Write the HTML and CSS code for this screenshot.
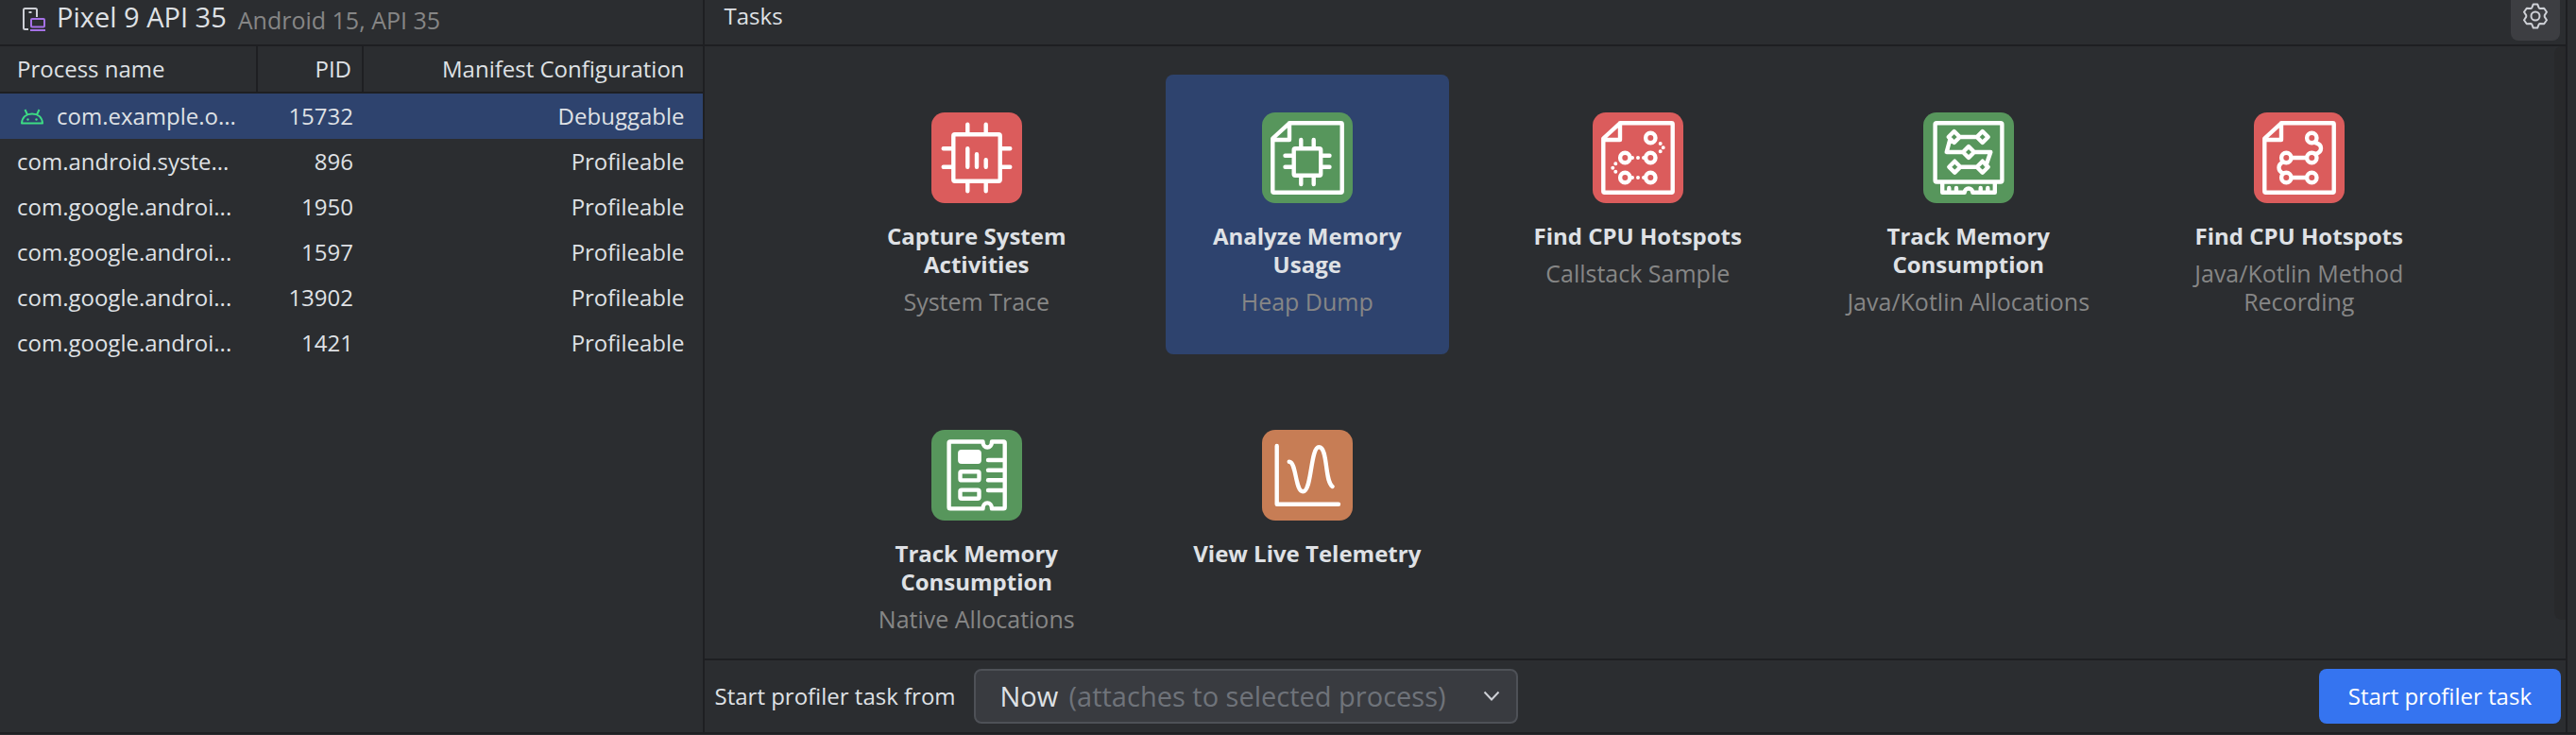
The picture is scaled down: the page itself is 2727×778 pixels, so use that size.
FILE: index.html
```html
<!DOCTYPE html>
<html lang="en">
<head>
<meta charset="utf-8">
<title>Profiler</title>
<link rel="stylesheet" href="styles.css">
</head>
<body>
<svg class="defs" aria-hidden="true">
  <symbol id="page" viewBox="0 0 96 96">
    <path d="M29 11.3H83.5Q84.7 11.3 84.7 12.5V83.5Q84.7 84.7 83.5 84.7H12.5Q11.3 84.7 11.3 83.5V27.5ZM29 11.3V29H11.3"/>
  </symbol>
</svg>
<div class="profiler">
  <main class="panes">
    <section class="processes">
      <header class="bar device">
        <svg class="device-icon" viewBox="0 0 28 28" aria-hidden="true">
          <path d="M8 25H4.5Q3 25 3 23.5V4.5Q3 3 4.5 3H15.5Q17 3 17 4.5V12" stroke="#ced0d6"/>
          <path d="M8.5 7H11.5" stroke="#ced0d6"/>
          <rect x="11" y="14" width="14" height="8.5" rx="1" stroke="#a571e6"/>
          <path d="M10 26H26" stroke="#a571e6"/>
        </svg>
        <h1 class="device-name">Pixel 9 API 35</h1>
        <span class="device-detail">Android 15, API 35</span>
      </header>
      <table class="process-table">
        <colgroup><col class="col-name"><col class="col-pid"><col></colgroup>
        <thead><tr><th>Process name</th><th>PID</th><th>Manifest Configuration</th></tr></thead>
        <tbody>
          <tr class="selected"><td><span class="app"><svg class="app-icon" viewBox="0 0 26 18" aria-hidden="true"><path d="M2 16.5C2.5 10 7 6.5 13 6.5S23.5 10 24 16.5ZM8 7.5L5.5 2M18 7.5L20.5 2"/><circle cx="8.5" cy="12.5" r="1.2"/><circle cx="17.5" cy="12.5" r="1.2"/></svg>com.example.o...</span></td><td>15732</td><td>Debuggable</td></tr>
          <tr><td>com.android.syste...</td><td>896</td><td>Profileable</td></tr>
          <tr><td>com.google.androi...</td><td>1950</td><td>Profileable</td></tr>
          <tr><td>com.google.androi...</td><td>1597</td><td>Profileable</td></tr>
          <tr><td>com.google.androi...</td><td>13902</td><td>Profileable</td></tr>
          <tr><td>com.google.androi...</td><td>1421</td><td>Profileable</td></tr>
        </tbody>
      </table>
    </section>
    <section class="tasks">
      <header class="bar tasks-bar">
        <h2 class="tasks-title">Tasks</h2>
        <button class="settings" type="button" aria-label="Settings">
          <svg viewBox="0 0 30 30" aria-hidden="true"><path d="M12.8 2.5H17.2L18.8 6.4Q19.3 7 20 7.1L24.2 6.7L27 10.8L24.8 14.1Q24.5 15 24.8 15.9L27 19.2L24.2 23.3L20 22.9Q19.3 23 18.8 23.6L17.2 27.5H12.8L11.2 23.6Q10.7 23 10 22.9L5.8 23.3L3 19.2L5.2 15.9Q5.5 15 5.2 14.1L3 10.8L5.8 6.7L10 7.1Q10.7 7 11.2 6.4Z"/><circle cx="15" cy="15" r="4.5"/></svg>
        </button>
      </header>
      <div class="task-area">
        <div class="task-grid">
          <button class="task" type="button">
            <svg class="task-icon red" viewBox="0 0 96 96" aria-hidden="true"><rect x="23.3" y="23.3" width="49.4" height="49.4" rx="1.5"/><path d="M38.3 12.7V22M57.7 12.7V22M38.3 74V83.3M57.7 74V83.3M12.7 38.3H22M12.7 57.7H22M74 38.3H83.3M74 57.7H83.3M38.3 38.2V57.8M48 44.2V57.8M57.7 50.2V57.8"/></svg>
            <span class="task-name">Capture System Activities</span><span class="task-kind">System Trace</span>
          </button>
          <button class="task selected" type="button">
            <svg class="task-icon green" viewBox="0 0 96 96" aria-hidden="true"><use href="#page"/><rect x="33.7" y="38.3" width="28.5" height="28.5" rx="1.5"/><path d="M41.3 29V37M54.7 29V37M41.3 68V76M54.7 68V76M24.5 45.7H32M24.5 57.7H32M64 45.7H71.5M64 57.7H71.5"/></svg>
            <span class="task-name">Analyze Memory Usage</span><span class="task-kind">Heap Dump</span>
          </button>
          <button class="task" type="button">
            <svg class="task-icon red" viewBox="0 0 96 96" aria-hidden="true"><use href="#page"/><circle cx="61.3" cy="27" r="5.2"/><circle cx="34.3" cy="48" r="5.2"/><circle cx="61.3" cy="48" r="5.2"/><circle cx="34.3" cy="69" r="5.2"/><circle cx="61.3" cy="69" r="5.2"/><path class="dots" d="M71.7 33h0M74.7 37.3h0M71.7 41.3h0M42 48h0M48 48h0M54 48h0M42 69h0M48 69h0M54 69h0M24.3 54.3h0M21.3 58.7h0M24.3 62.7h0"/></svg>
            <span class="task-name">Find CPU Hotspots</span><span class="task-kind">Callstack Sample</span>
          </button>
          <button class="task" type="button">
            <svg class="task-icon green" viewBox="0 0 96 96" aria-hidden="true"><rect x="12.6" y="11.3" width="70.8" height="62.2" rx="1.5"/><path d="M32.7 20L38.7 26L32.7 32L26.7 26ZM62.7 20L68.7 26L62.7 32L56.7 26ZM48 36L54 42L48 48L42 42ZM33.3 51.7L39.3 57.7L33.3 63.7L27.3 57.7ZM62.7 51.7L68.7 57.7L62.7 63.7L56.7 57.7ZM39 26H56.5M28.5 28L24.7 42H42M54 42H71.3L66.5 56M39.5 57.7H56.5"/><path d="M20.2 75V84.8H43.7C43.7 79 52.3 79 52.3 84.8H75.8V75M27.3 80V83.5M35 80V83.5M60.7 80V83.5M68.3 80V83.5"/></svg>
            <span class="task-name">Track Memory Consumption</span><span class="task-kind">Java/Kotlin Allocations</span>
          </button>
          <button class="task" type="button">
            <svg class="task-icon red" viewBox="0 0 96 96" aria-hidden="true"><use href="#page"/><circle cx="61.3" cy="27" r="5.2"/><circle cx="34.3" cy="48" r="5.2"/><circle cx="61.3" cy="48" r="5.2"/><circle cx="34.3" cy="69" r="5.2"/><circle cx="61.3" cy="69" r="5.2"/><path d="M40 48H55.5M40 69H55.5M65 32C73 34 73 42 65 44M31 52.5C25 55 25 62 31 64.5"/></svg>
            <span class="task-name">Find CPU Hotspots</span><span class="task-kind">Java/Kotlin Method Recording</span>
          </button>
          <button class="task" type="button">
            <svg class="task-icon green" viewBox="0 0 96 96" aria-hidden="true"><path d="M20 12.5H54.5C54.5 20.5 64 20.5 64 12.5H76.3Q77.7 12.5 77.7 14V82Q77.7 83.4 76.3 83.4H64C64 75.4 54.5 75.4 54.5 83.4H20Q18.6 83.4 18.6 82V14Q18.6 12.5 20 12.5Z"/><rect x="30.3" y="23.3" width="20.4" height="10.4" rx="1.5" fill="#fff"/><rect x="30.5" y="44.2" width="20" height="9.2" rx="1.5"/><rect x="30.5" y="63.6" width="20" height="9.2" rx="1.5"/><path d="M60 32H77M60 42.7H77M60 53.3H77M60 64H77"/></svg>
            <span class="task-name">Track Memory Consumption</span><span class="task-kind">Native Allocations</span>
          </button>
          <button class="task" type="button">
            <svg class="task-icon orange" viewBox="0 0 96 96" aria-hidden="true"><path d="M15.7 17V78.7H81M28.7 33.7C36.5 33.7 35 65.3 43.3 65.3C53 65.3 51 18.3 60.3 18.3C70 18.3 66 54 74.5 60"/></svg>
            <span class="task-name">View Live Telemetry</span>
          </button>
        </div>
        <div class="scroll-track"></div>
      </div>
      <footer class="start-bar">
        <label class="start-label" for="start-from">Start profiler task from</label>
        <div class="start-select">
          <select id="start-from"><option>Now</option></select>
          <span class="hint">(attaches to selected process)</span>
          <svg class="chevron" viewBox="0 0 18 12" aria-hidden="true"><path d="M1.5 1.5L9 9.5L16.5 1.5"/></svg>
        </div>
        <button class="start" type="button">Start profiler task</button>
      </footer>
    </section>
  </main>
</div>
</body>
</html>
```
FILE: styles.css
```css
* { box-sizing: border-box; }
body {
  margin: 0;
  background: #2b2d30;
  color: #dfe1e5;
  font: 24px/30px "Open Sans", "Noto Sans", sans-serif;
}
h1, h2 { margin: 0; font-weight: 400; }
button, select { font: inherit; color: inherit; border: 0; }
svg { display: block; fill: none; flex: none; }
.defs { position: absolute; width: 0; height: 0; }

.profiler {
  display: flex;
  flex-direction: column;
  height: 100vh;
  padding-bottom: 1px;
  overflow: hidden;
}
.profiler::after { content: ""; height: 2px; flex: none; background: #1e1f22; }
.panes {
  display: flex;
  flex: 1;
  min-height: 0;
  margin-right: 9px;
  border-right: 2px solid #1e1f22;
}

.bar {
  display: flex;
  height: 49px;
  flex: none;
  border-bottom: 2px solid #1e1f22;
}
.processes { width: 27.45%; flex: none; border-right: 2px solid #1e1f22; }
.device { align-items: flex-start; padding-left: 22px; }
.device-icon { width: 28px; height: 28px; margin-top: 6px; stroke-width: 2; }
.device-name { margin-left: 10px; font-size: 29px; line-height: 36px; white-space: nowrap; }
.device-detail { margin-left: 12px; color: #868686; font-size: 25px; line-height: 42px; white-space: nowrap; }

.process-table { width: 100%; table-layout: fixed; border-collapse: separate; border-spacing: 0; }
.col-name { width: 273px; }
.col-pid { width: 112px; }
.process-table th, .process-table td {
  height: 48px;
  padding: 0 19px 0 18px;
  font-weight: 400;
  text-align: right;
  white-space: nowrap;
}
.process-table th { height: 50px; border-bottom: 2px solid #1e1f22; border-right: 2px solid #1e1f22; }
.process-table th:last-child { border-right: 0; }
.process-table th:first-child, .process-table td:first-child { text-align: left; padding-right: 0; }
.process-table th:nth-child(2), .process-table td:nth-child(2) { padding: 0 11px 0 0; }
.selected { background: #2e436e; }
.app { display: flex; align-items: center; gap: 13px; padding-left: 3px; }
.app-icon { width: 26px; height: 18px; stroke: #3ddc84; stroke-width: 2; stroke-linejoin: round; }
.app-icon circle { fill: #3ddc84; stroke: none; }

.tasks { display: flex; flex: 1; min-width: 0; flex-direction: column; }
.tasks-bar { justify-content: space-between; padding: 0 6px 0 21px; }
.tasks-title { font-size: 24px; line-height: 34px; }
.settings {
  display: grid;
  place-items: center;
  width: 52px;
  height: 43px;
  padding: 0 0 9px;
  border-radius: 0 0 8px 8px;
  background: #3d3e42;
}
.settings svg { width: 30px; height: 30px; stroke: #ced0d6; stroke-width: 2; stroke-linejoin: round; }

.task-area { display: flex; flex: 1; min-height: 0; overflow: hidden; }
.task-grid {
  display: grid;
  flex: 1;
  grid-template-columns: repeat(auto-fill, 300px);
  grid-auto-rows: 296px;
  gap: 40px 50px;
  justify-content: center;
  padding: 30px 120px 0 138px;
}
.task {
  display: flex;
  flex-direction: column;
  align-items: center;
  padding: 40px 18px 0;
  border-radius: 8px;
  background: transparent;
}
.task.selected { background: #2e436e; }
.task-icon {
  width: 96px;
  height: 96px;
  border-radius: 14px;
  stroke: #fff;
  stroke-width: 4.4;
  stroke-linecap: round;
  stroke-linejoin: round;
}
.dots { stroke-width: 4; }
.red { background: #db5c5c; }
.green { background: #57965c; }
.orange { background: #c77d55; }
.task-name { margin-top: 20px; font-weight: 700; }
.task-kind { margin-top: 9px; color: #868686; font-size: 25px; }
.scroll-track { width: 12px; flex: none; margin-bottom: 41px; border-radius: 8px 0 0 8px; background: #28292b; }

.start-bar {
  display: flex;
  flex: none;
  align-items: center;
  height: 78px;
  padding: 0 5px 0 11px;
  border-top: 2px solid #1e1f22;
}
.start-label { white-space: nowrap; }
.start-select { display: grid; width: 576px; margin-left: 19px; align-items: center; font-size: 29px; }
.start-select > * { grid-area: 1 / 1; }
.start-select select {
  height: 58px;
  padding: 0 26px;
  appearance: none;
  border: 2px solid #4e5157;
  border-radius: 8px;
  background: #393b40;
}
.hint { padding-left: 101px; color: #6f737a; pointer-events: none; white-space: nowrap; }
.chevron { width: 18px; height: 12px; justify-self: end; margin-right: 19px; stroke: #ced0d6; stroke-width: 2; pointer-events: none; }
.start { height: 58px; margin-left: auto; padding: 0 31px; border-radius: 8px; background: #3574f0; color: #fff; white-space: nowrap; }
```
